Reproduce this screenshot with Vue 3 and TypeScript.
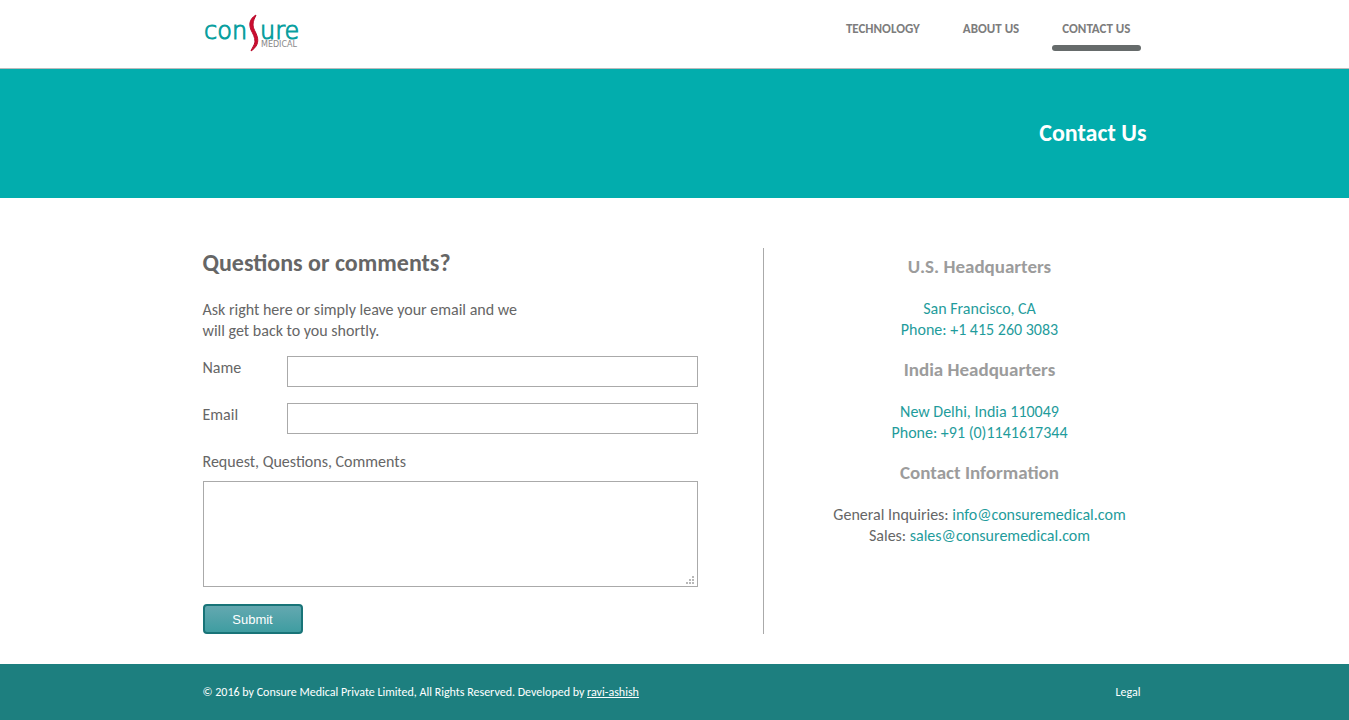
<script setup lang="ts">
import { ref } from 'vue'

interface NavItem { label: string; active: boolean }
interface Office { title: string; lines: string[] }

const nav: NavItem[] = [
  { label: 'Technology', active: false },
  { label: 'About Us', active: false },
  { label: 'Contact Us', active: true },
]
const offices: Office[] = [
  { title: 'U.S. Headquarters', lines: ['San Francisco, CA', 'Phone: +1 415 260 3083'] },
  { title: 'India Headquarters', lines: ['New Delhi, India 110049', 'Phone: +91 (0)1141617344'] },
]
const name = ref('')
const email = ref('')
const message = ref('')
</script>

<template>
  <div class="page">
    <header class="header">
      <div class="wrap header-row">
        <a class="logo" href="#" aria-label="Consure Medical">
          <svg width="98" height="40" viewBox="0 0 98 40">
            <text class="logo-main" x="1" y="26">con</text>
            <text class="logo-main" x="57" y="26">ure</text>
            <text class="logo-sub" x="58" y="34">MEDICAL</text>
            <path d="M53 2C46 6 46 12 48 17C50 21 52 24 52 29C51 33 49 35 48 38C54 34 56 29 54 23C53 19 50 16 50 12C50 7 52 5 53 2Z" fill="#cc0c30" stroke="#b80c2c" stroke-width="1" />
          </svg>
        </a>
        <nav class="nav">
          <a v-for="item in nav" :key="item.label" href="#" :class="{ active: item.active }">{{ item.label }}</a>
        </nav>
      </div>
    </header>

    <section class="banner">
      <div class="wrap"><h1>Contact Us</h1></div>
    </section>

    <main class="wrap content">
      <form class="form" @submit.prevent>
        <h2>Questions or comments?</h2>
        <p class="intro">Ask right here or simply leave your email and we<br />will get back to you shortly.</p>
        <div class="field">
          <label for="name">Name</label>
          <input id="name" v-model="name" type="text" />
        </div>
        <div class="field">
          <label for="email">Email</label>
          <input id="email" v-model="email" type="email" />
        </div>
        <label class="message-label" for="message">Request, Questions, Comments</label>
        <div class="message">
          <textarea id="message" v-model="message"></textarea>
          <svg class="grip" width="8" height="8" viewBox="0 0 8 8" aria-hidden="true">
            <path d="M6 0h2v2h-2zM3 3h2v2h-2zM6 3h2v2h-2zM0 6h2v2h-2zM3 6h2v2h-2zM6 6h2v2h-2z" fill="#b8b8b8" />
          </svg>
        </div>
        <button type="submit">Submit</button>
      </form>

      <aside class="info">
        <section v-for="office in offices" :key="office.title">
          <h3>{{ office.title }}</h3>
          <p class="teal"><template v-for="(line, i) in office.lines" :key="line"><br v-if="i" />{{ line }}</template></p>
        </section>
        <section>
          <h3>Contact Information</h3>
          <p>General Inquiries: <a href="mailto:info@consuremedical.com">info@consuremedical.com</a><br />Sales: <a href="mailto:sales@consuremedical.com">sales@consuremedical.com</a></p>
        </section>
      </aside>
    </main>

    <footer class="footer">
      <div class="wrap footer-row">
        <span>© 2016 by Consure Medical Private Limited, All Rights Reserved. Developed by <a class="credit" href="#">ravi-ashish</a></span>
        <a class="legal" href="#">Legal</a>
      </div>
    </footer>
  </div>
</template>

<style>
body { margin: 0; background: #fff; }
</style>

<style scoped>
* { box-sizing: border-box; }
.page {
  min-height: 100vh;
  display: flex;
  flex-direction: column;
  font-family: Calibri, Carlito, Lato, sans-serif;
  font-size: 16px;
  line-height: 21px;
  color: #666;
}
.wrap { width: 70%; max-width: 944px; margin: 0 auto; }
h1, h2, h3, p { margin: 0; }
a { color: inherit; text-decoration: none; }

.header { border-bottom: 1px solid #bbb; }
.header-row { display: flex; justify-content: space-between; height: 68px; }
.logo { padding-top: 13px; }
.logo svg { display: block; overflow: visible; }
.logo-main { font: 200 24px "DejaVu Sans", sans-serif; fill: #0a9f9f; stroke: #0a9f9f; stroke-width: 1px; }
.logo-sub { font: 8px "DejaVu Sans", sans-serif; fill: #888; }
.nav { display: flex; gap: 23px; padding: 18px 6px 0 0; }
.nav a {
  height: 33px;
  padding: 0 10px;
  font-size: 13px;
  line-height: 22px;
  font-weight: 700;
  text-transform: uppercase;
  color: #7d7d7d;
  position: relative;
}
.nav .active::after {
  content: "";
  position: absolute;
  left: 0;
  right: 0;
  bottom: 0;
  height: 6px;
  border-radius: 3px;
  background: #666b6b;
}

.banner { background: #02adad; height: 129px; padding-bottom: 2px; display: flex; align-items: center; }
.banner h1 { font-size: 24px; line-height: 28px; color: #fff; text-align: right; }

.content { display: flex; justify-content: space-between; padding: 50px 0 30px; }
.form { width: 561px; padding-right: 65px; border-right: 1px solid #aaa; }
.form h2 { font-size: 24px; line-height: 30px; margin-bottom: 21px; }
.intro { margin-bottom: 15px; }
.field { display: flex; justify-content: space-between; margin-bottom: 16px; }
.field label { padding-top: 1px; }
input, textarea { border: 1px solid #aaa; border-radius: 0; background: #fff; font: inherit; color: inherit; outline: 0; }
input { width: 83%; height: 31px; padding: 4px 8px; }
.message-label { display: block; padding-top: 1px; margin-bottom: 9px; }
.message { position: relative; margin-bottom: 17px; }
textarea { display: block; width: 100%; height: 106px; padding: 8px; resize: none; }
.grip { position: absolute; right: 4px; bottom: 3px; }
button {
  display: block;
  width: 100px;
  height: 30px;
  padding: 0;
  border: 2px solid #187478;
  border-radius: 4px;
  background: linear-gradient(#64a8b0, #3f9da1);
  color: #fff;
  font: 13px "Liberation Sans", Arial, sans-serif;
}

.info { width: 334px; padding-top: 8px; text-align: center; }
.info section { margin-bottom: 19px; }
.info h3 { font-size: 19px; line-height: 22px; margin-bottom: 20px; color: #9c9c9c; }
.info .teal, .info a { color: #1f9c9c; }

.footer { flex: 1; background: #1d7f7f; color: #fff; font-size: 12px; }
.footer-row { display: flex; justify-content: space-between; padding: 18px 6px 17px 0; }
.credit { text-decoration: underline; }
</style>
